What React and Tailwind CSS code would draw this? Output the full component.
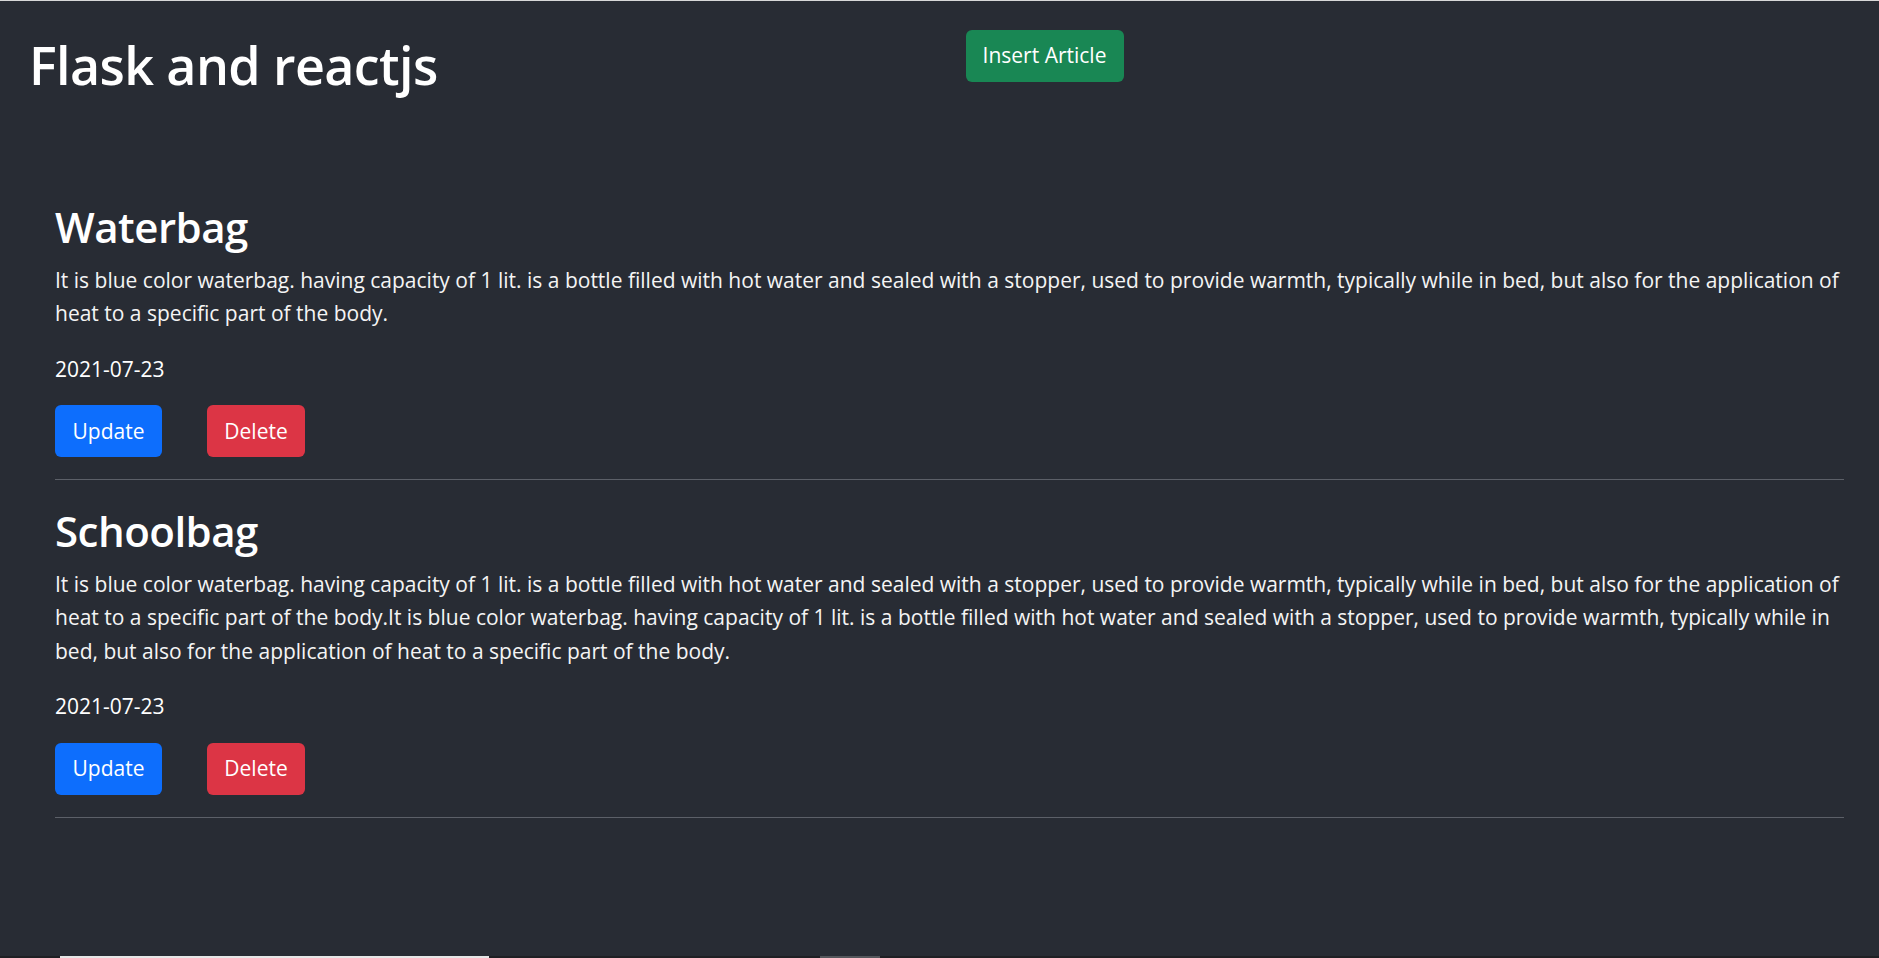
const articles = [
  {
    id: 1,
    title: 'Waterbag',
    body: 'It is blue color waterbag. having capacity of 1 lit. is a bottle filled with hot water and sealed with a stopper, used to provide warmth, typically while in bed, but also for the application of heat to a specific part of the body.',
    date: '2021-07-23',
  },
  {
    id: 2,
    title: 'Schoolbag',
    body: 'It is blue color waterbag. having capacity of 1 lit. is a bottle filled with hot water and sealed with a stopper, used to provide warmth, typically while in bed, but also for the application of heat to a specific part of the body.It is blue color waterbag. having capacity of 1 lit. is a bottle filled with hot water and sealed with a stopper, used to provide warmth, typically while in bed, but also for the application of heat to a specific part of the body.',
    date: '2021-07-23',
  },
];

function Article({ article }) {
  return (
    <div className="pt-[6px]">
      <h2 className="text-[42px] font-semibold leading-[1.2] tracking-[-0.5px]">{article.title}</h2>
      <p className="mt-[11px] text-[21px] leading-[33.5px] text-[#f4f4f4]">{article.body}</p>
      <p className="mt-[22px] text-[21px] leading-[33.5px]">{article.date}</p>
      <div className="mt-[19px] flex gap-[45px]">
        <button
          type="button"
          className="h-[52px] w-[107px] rounded-[6px] bg-[#0d6efd] text-[21px] text-white"
        >
          Update
        </button>
        <button
          type="button"
          className="h-[52px] w-[98px] rounded-[6px] bg-[#dc3545] text-[21px] text-white"
        >
          Delete
        </button>
      </div>
      <hr className="mt-[22px] mb-[20px] border-0 border-t border-[#5c6068]" />
    </div>
  );
}

export default function App() {
  return (
    <div className="flex min-h-screen flex-col border-t border-[#d8d8d8] bg-[#282c34] font-['Open_Sans',sans-serif] text-white">
      <header className="grid grid-cols-2">
        <div className="pl-[29px] pt-[33px]">
          <h1 className="text-[52px] font-semibold leading-[1.2] tracking-[-0.6px]">Flask and reactjs</h1>
        </div>
        <div className="pl-[26px] pt-[29px]">
          <button
            type="button"
            className="h-[52px] w-[158px] rounded-[6px] bg-[#198754] text-[21px] text-white"
          >
            Insert Article
          </button>
        </div>
      </header>

      <main className="mt-[100px] pl-[55px] pr-[35px]">
        {articles.map((article) => (
          <Article key={article.id} article={article} />
        ))}
      </main>

      <div className="mt-auto flex h-[2px] bg-[#1f2024]">
        <div className="w-[60px]" />
        <div className="w-[429px] bg-[#e6e6e6]" />
        <div className="w-[331px]" />
        <div className="w-[60px] bg-[#55575c]" />
      </div>
    </div>
  );
}
